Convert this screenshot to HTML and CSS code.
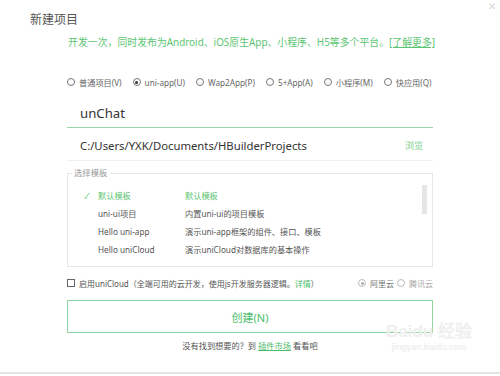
FILE: index.html
```html
<!DOCTYPE html>
<html lang="zh-CN">
<head>
  <meta charset="UTF-8">
  <title>新建项目</title>
  <link rel="stylesheet" href="styles.css">
</head>
<body>
  <div class="dialog">
    <span class="close">&#x2715;</span>
    <h1 class="title">新建项目</h1>

    <div class="main">
      <p class="intro">开发一次，同时发布为Android、iOS原生App、小程序、H5等多个平台。<a href="#">[了解更多]</a></p>

      <div class="types">
        <label class="radio"><span class="dot"></span>普通项目(V)</label>
        <label class="radio"><span class="dot on"></span>uni-app(U)</label>
        <label class="radio"><span class="dot"></span>Wap2App(P)</label>
        <label class="radio"><span class="dot"></span>5+App(A)</label>
        <label class="radio"><span class="dot"></span>小程序(M)</label>
        <label class="radio"><span class="dot"></span>快应用(Q)</label>
      </div>

      <div class="field name">unChat</div>
      <div class="field path">
        <span>C:/Users/YXK/Documents/HBuilderProjects</span>
        <a href="#" class="browse">浏览</a>
      </div>

      <fieldset class="templates">
        <legend>选择模板</legend>
        <div class="tpl-body">
          <ul class="tpl-list">
            <li class="active"><span class="check">&#x2713;</span><span class="tname">默认模板</span><span>默认模板</span></li>
            <li><span class="check"></span><span class="tname">uni-ui项目</span><span>内置uni-ui的项目模板</span></li>
            <li><span class="check"></span><span class="tname">Hello uni-app</span><span>演示uni-app框架的组件、接口、模板</span></li>
            <li><span class="check"></span><span class="tname">Hello uniCloud</span><span>演示uniCloud对数据库的基本操作</span></li>
          </ul>
          <div class="scroll"><div class="thumb"></div></div>
        </div>
      </fieldset>

      <div class="cloud">
        <label class="cb"><span class="box"></span>启用uniCloud（全端可用的云开发，使用js开发服务器逻辑。<a href="#">详情</a>）</label>
        <div class="vendors">
          <label class="radio off"><span class="dot on"></span>阿里云</label>
          <label class="radio off light"><span class="dot"></span>腾讯云</label>
        </div>
      </div>

      <button class="create">创建(N)</button>

      <p class="more">没有找到想要的？到 <a href="#">插件市场</a> 看看吧</p>
    </div>

    <div class="watermark">
      <span class="wm-logo">Bai<b>du</b> 经验</span>
      <span class="wm-url">jingyan.baidu.com</span>
    </div>
  </div>
</body>
</html>
```

FILE: styles.css
```css
body {
  margin: 0;
  background: #fff;
  font-family: "Noto Sans", "Noto Sans CJK SC", sans-serif;
  color: #555;
}
a {
  color: #4cbd6a;
}
.dialog {
  position: relative;
  height: 374px;
  border-bottom: 2px solid #e4e4e4;
  padding-top: 12px;
  box-sizing: border-box;
  overflow: hidden;
}
.close {
  position: absolute;
  top: -1px;
  right: 4px;
  font-size: 10px;
  color: #d8d8d8;
}
.title {
  margin: 0 0 0 30px;
  font-size: 12px;
  line-height: 16px;
  font-weight: normal;
  color: #555;
}
.main {
  width: 366px;
  margin: 6px 0 0 67px;
}
.intro {
  margin: 0 0 0 1px;
  font-size: 9.9px;
  line-height: 16px;
  color: #5cc572;
  white-space: nowrap;
}
.intro a {
  color: #5cc572;
}
.types {
  display: flex;
  margin-top: 25px;
  height: 14px;
  align-items: center;
  font-size: 8.2px;
  color: #666;
}
.radio {
  display: flex;
  align-items: center;
  margin-right: 11px;
  white-space: nowrap;
}
.dot {
  width: 6px;
  height: 6px;
  border: 1px solid #777;
  border-radius: 50%;
  margin-right: 4px;
  position: relative;
  flex: none;
}
.dot.on::after {
  content: "";
  position: absolute;
  left: 1.5px;
  top: 1.5px;
  width: 3px;
  height: 3px;
  border-radius: 50%;
  background: #333;
}
.field {
  display: flex;
  justify-content: space-between;
  align-items: center;
  padding: 0 10px 4px 13px;
  line-height: 20px;
  color: #333;
}
.name {
  padding-top: 14px;
  font-size: 13.2px;
  border-bottom: 1px solid #95d8a5;
}
.path {
  padding-top: 8px;
  border-bottom: 1px solid #efefef;
  font-size: 11.3px;
}
.browse {
  font-size: 9px;
  color: #79d08c;
  text-decoration: none;
}
.templates {
  margin: 6px 0 0;
  padding: 0 5px 8px 16px;
  border: 1px solid #e6e6e6;
  min-width: 0;
}
.templates legend {
  padding: 0 2px;
  margin-left: -12px;
  font-size: 8.4px;
  line-height: 12px;
  color: #999;
}
.tpl-body {
  display: flex;
  margin-top: 7px;
}
.tpl-list {
  flex: 1;
  list-style: none;
  margin: 0;
  padding: 0;
  font-size: 8.2px;
  color: #555;
}
.tpl-list li {
  display: flex;
  align-items: center;
  height: 18px;
}
.tpl-list li.active {
  color: #5cc572;
}
.check {
  width: 14px;
  color: #5cc572;
  font-size: 8px;
}
.tname {
  width: 87px;
}
.scroll {
  width: 5px;
}
.thumb {
  height: 29px;
  margin-top: -1px;
  background: #e6e6e6;
}
.cloud {
  display: flex;
  justify-content: space-between;
  align-items: center;
  height: 14px;
  margin-top: 9px;
  font-size: 8px;
  color: #555;
  white-space: nowrap;
}
.cb {
  display: flex;
  align-items: center;
}
.cb a {
  text-decoration: none;
}
.box {
  width: 6px;
  height: 6px;
  border: 1px solid #666;
  margin-right: 4px;
}
.vendors {
  display: flex;
}
.vendors .radio {
  margin-right: 3px;
}
.vendors .radio:last-child {
  margin-right: 0;
}
.radio.off {
  color: #777;
}
.radio.off .dot {
  border-color: #bbb;
}
.radio.off .dot.on::after {
  background: #aaa;
}
.radio.light {
  color: #aaa;
}
.create {
  display: block;
  width: 100%;
  height: 33px;
  margin-top: 10px;
  border: 1px solid #8fd6a0;
  background: #fff;
  color: #4cbd6a;
  font-family: inherit;
  font-size: 11px;
}
.more {
  margin: 7px 0 0;
  text-align: center;
  font-size: 8.2px;
  line-height: 12px;
  color: #555;
}
.watermark {
  position: absolute;
  left: 386px;
  top: 322px;
  display: flex;
  flex-direction: column;
  align-items: center;
  color: #efefef;
  font-family: "Liberation Sans", sans-serif;
}
.wm-logo {
  font-size: 17px;
  font-weight: bold;
  line-height: 20px;
}
.wm-url {
  font-size: 8.5px;
  font-weight: bold;
}
```
